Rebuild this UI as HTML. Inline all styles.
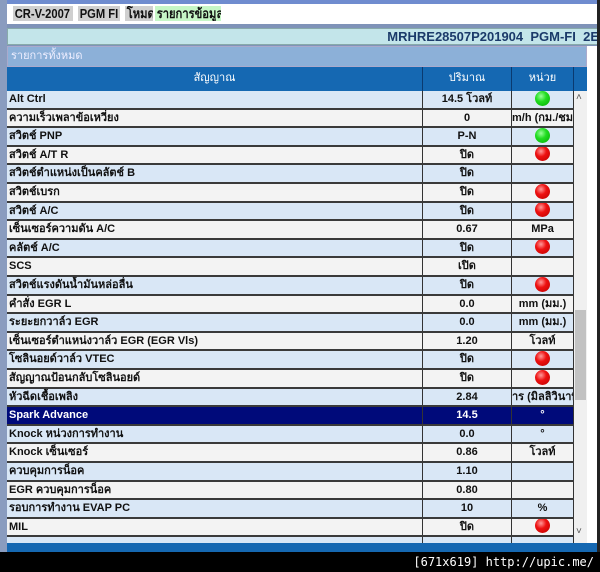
<!DOCTYPE html><html><head><meta charset="utf-8"><style>
*{margin:0;padding:0;box-sizing:border-box}
body{width:600px;height:572px;background:#7f93b8;position:relative;overflow:hidden;font-family:"Liberation Sans","DejaVu Sans",sans-serif;}
.a{position:absolute}
.lbl{position:absolute;top:6px;height:15px;font-weight:bold;font-size:13px;line-height:15px;background:#cfcfcf;color:#111;white-space:nowrap;overflow:hidden}
.lbl span{display:inline-block;transform:scaleX(0.86);transform-origin:0 0;padding-left:2px}
.row{position:absolute;left:7px;width:567px;height:18.6px;border-bottom:2px solid #3a3a3a;font-weight:bold;font-size:11px;line-height:16px;color:#111}
.row div{position:absolute;top:0;height:100%;white-space:nowrap;overflow:hidden;border-right:1px solid #333}
.c1{left:0;width:416px;padding-left:2px}
.c2{left:416px;width:89px;text-align:center}
.c3{left:505px;width:62px;text-align:center}
.o{background:#d9e7f6}.e{background:#f3f3f3}
.sel{background:#000a7a;color:#fff}
.g,.r{display:inline-block;width:15px;height:15px;border-radius:50%;vertical-align:middle;margin-top:-2px}
.g{background:radial-gradient(circle at 40% 35%,#9f9 0,#2d2 40%,#0a0 100%)}
.r{background:radial-gradient(circle at 40% 35%,#f99 0,#e11 40%,#b00 100%)}
</style></head><body>
<div class="a" style="left:0;top:0;width:600px;height:4px;background:#6f8ccf"></div>
<div class="a" style="left:7px;top:4px;width:593px;height:20px;background:#fff"></div>
<div class="lbl" style="left:13px;width:60px"><span>CR-V-2007</span></div>
<div class="lbl" style="left:78px;width:42px"><span>PGM FI</span></div>
<div class="lbl" style="left:125px;width:28px"><span>โหมด</span></div>
<div class="lbl" style="left:155px;width:66px;background:#c6f7c6"><span>รายการข้อมูล</span></div>
<div class="a" style="left:7px;top:28px;width:593px;height:17px;background:#c3e5ea;border:1px solid #8aa;font-size:13px;font-weight:bold;color:#1b3a6a;text-align:right;white-space:nowrap;line-height:15px;overflow:hidden">MRHRE28507P201904&nbsp; PGM-FI&nbsp; 2E</div>
<div class="a" style="left:7px;top:46px;width:580px;height:21px;background:#8cb0d8;border:1px solid #aac;color:#eef;font-size:11px;line-height:19px;padding-left:3px">รายการทั้งหมด</div>
<div class="a" style="left:587px;top:46px;width:10px;height:497px;background:#fff"></div>
<div class="a" style="left:597px;top:0;width:3px;height:572px;background:#222"></div>
<div class="a" style="left:7px;top:67px;width:580px;height:24px;background:#1568b2"></div>
<div class="a" style="left:7px;top:67px;width:416px;height:24px;color:#fff;font-size:11px;line-height:22px;text-align:center;border-right:1px solid #0a3a70">สัญญาณ</div>
<div class="a" style="left:423px;top:67px;width:89px;height:24px;color:#fff;font-size:11px;line-height:22px;text-align:center;border-right:1px solid #0a3a70">ปริมาณ</div>
<div class="a" style="left:512px;top:67px;width:62px;height:24px;color:#fff;font-size:11px;line-height:22px;text-align:center;border-right:1px solid #0a3a70">หน่วย</div>

<div class="row o" style="top:91px"><div class="c1">Alt Ctrl</div><div class="c2">14.5 โวลท์</div><div class="c3"><span class="g"></span></div></div>
<div class="row e" style="top:109.6px"><div class="c1">ความเร็วเพลาข้อเหวี่ยง</div><div class="c2">0</div><div class="c3" style="text-align:left">m/h (กม./ชม</div></div>
<div class="row o" style="top:128.2px"><div class="c1">สวิตช์ PNP</div><div class="c2">P-N</div><div class="c3"><span class="g"></span></div></div>
<div class="row e" style="top:146.8px"><div class="c1">สวิตช์ A/T R</div><div class="c2">ปิด</div><div class="c3"><span class="r"></span></div></div>
<div class="row o" style="top:165.4px"><div class="c1">สวิตช์ตำแหน่งเป็นคลัตช์ B</div><div class="c2">ปิด</div><div class="c3"></div></div>
<div class="row e" style="top:184px"><div class="c1">สวิตช์เบรก</div><div class="c2">ปิด</div><div class="c3"><span class="r"></span></div></div>
<div class="row o" style="top:202.6px"><div class="c1">สวิตช์ A/C</div><div class="c2">ปิด</div><div class="c3"><span class="r"></span></div></div>
<div class="row e" style="top:221.2px"><div class="c1">เซ็นเซอร์ความดัน A/C</div><div class="c2">0.67</div><div class="c3">MPa</div></div>
<div class="row o" style="top:239.8px"><div class="c1">คลัตช์ A/C</div><div class="c2">ปิด</div><div class="c3"><span class="r"></span></div></div>
<div class="row e" style="top:258.4px"><div class="c1">SCS</div><div class="c2">เปิด</div><div class="c3"></div></div>
<div class="row o" style="top:277px"><div class="c1">สวิตช์แรงดันน้ำมันหล่อลื่น</div><div class="c2">ปิด</div><div class="c3"><span class="r"></span></div></div>
<div class="row e" style="top:295.6px"><div class="c1">คำสั่ง EGR L</div><div class="c2">0.0</div><div class="c3">mm (มม.)</div></div>
<div class="row o" style="top:314.2px"><div class="c1">ระยะยกวาล์ว EGR</div><div class="c2">0.0</div><div class="c3">mm (มม.)</div></div>
<div class="row e" style="top:332.8px"><div class="c1">เซ็นเซอร์ตำแหน่งวาล์ว EGR (EGR Vls)</div><div class="c2">1.20</div><div class="c3">โวลท์</div></div>
<div class="row o" style="top:351.4px"><div class="c1">โซลินอยด์วาล์ว VTEC</div><div class="c2">ปิด</div><div class="c3"><span class="r"></span></div></div>
<div class="row e" style="top:370px"><div class="c1">สัญญาณป้อนกลับโซลินอยด์</div><div class="c2">ปิด</div><div class="c3"><span class="r"></span></div></div>
<div class="row o" style="top:388.6px"><div class="c1">หัวฉีดเชื้อเพลิง</div><div class="c2">2.84</div><div class="c3" style="text-align:right">าร (มิลลิวินาที</div></div>
<div class="row sel" style="top:407.2px"><div class="c1">Spark Advance</div><div class="c2">14.5</div><div class="c3">°</div></div>
<div class="row o" style="top:425.8px"><div class="c1">Knock หน่วงการทำงาน</div><div class="c2">0.0</div><div class="c3">°</div></div>
<div class="row e" style="top:444.4px"><div class="c1">Knock เซ็นเซอร์</div><div class="c2">0.86</div><div class="c3">โวลท์</div></div>
<div class="row o" style="top:463px"><div class="c1">ควบคุมการน็อค</div><div class="c2">1.10</div><div class="c3"></div></div>
<div class="row e" style="top:481.6px"><div class="c1">EGR ควบคุมการน็อค</div><div class="c2">0.80</div><div class="c3"></div></div>
<div class="row o" style="top:500.2px"><div class="c1">รอบการทำงาน EVAP PC</div><div class="c2">10</div><div class="c3">%</div></div>
<div class="row e" style="top:518.8px"><div class="c1">MIL</div><div class="c2">ปิด</div><div class="c3"><span class="r"></span></div></div>
<div class="row o" style="top:537.4px"><div class="c1"></div><div class="c2"></div><div class="c3"></div></div>

<div class="a" style="left:574px;top:91px;width:13px;height:452px;background:#f0f0f0"></div>
<div class="a" style="left:575px;top:310px;width:11px;height:90px;background:#c2c2c2"></div>
<div class="a" style="left:576px;top:92px;font-size:10px;color:#555">˄</div>
<div class="a" style="left:576px;top:526px;font-size:10px;color:#555">˅</div>
<div class="a" style="left:0;top:0;width:7px;height:552px;background:#8a9cbf"></div>
<div class="a" style="left:7px;top:543px;width:590px;height:9px;background:#1568b2"></div>
<div class="a" style="left:0;top:552px;width:600px;height:20px;background:#000;color:#fff;font-family:'DejaVu Sans Mono',monospace;font-size:12px;text-align:right;line-height:20px;padding-right:6px">[671x619] http://upic.me/</div>
</body></html>
